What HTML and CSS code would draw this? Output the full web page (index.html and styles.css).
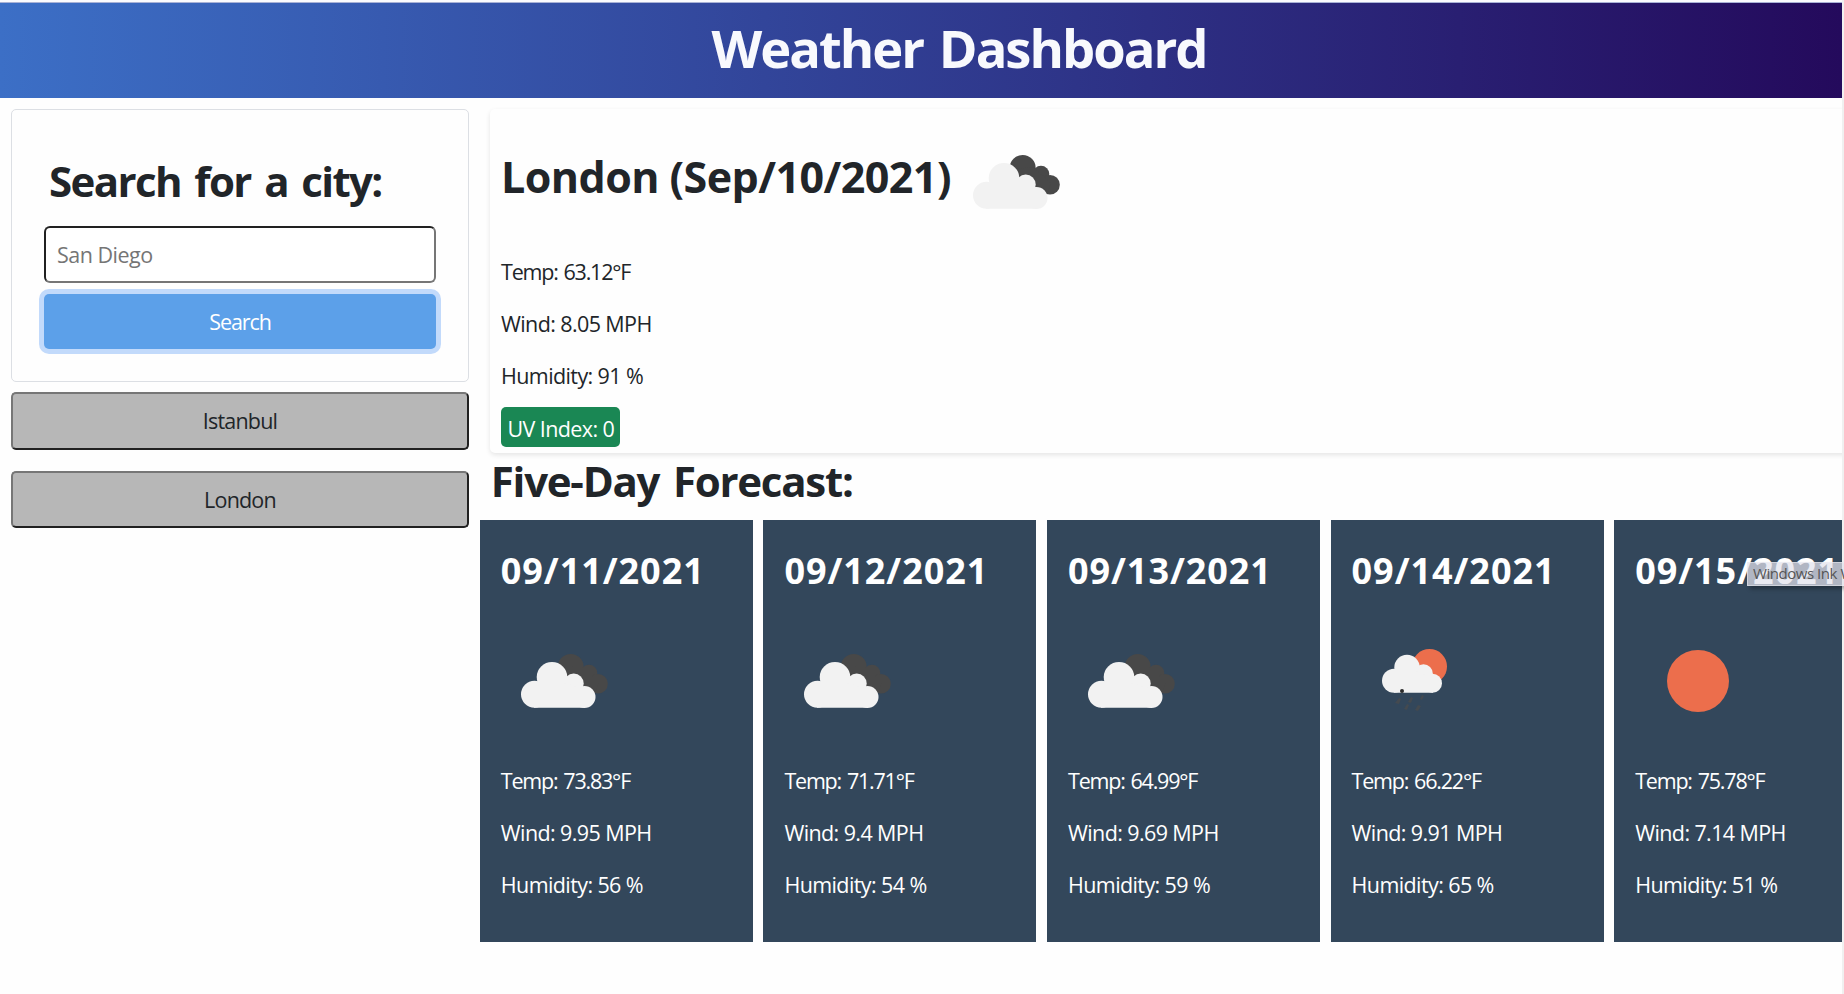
FILE: index.html
```html
<!DOCTYPE html>
<html lang="en">
<head>
<meta charset="utf-8">
<title>Weather Dashboard</title>
<link rel="stylesheet" href="styles.css">
</head>
<body>
<svg width="0" height="0" class="defs">
  <symbol id="clouds" viewBox="0 0 87 54">
    <g fill="#484848"><circle cx="49.700" cy="13" r="13"/><circle cx="68" cy="19" r="8.300"/><circle cx="77" cy="29.800" r="9.800"/><path d="M42 14L60 12L78 28L74 39L66 34L50 26Z"/></g>
    <g fill="#f2f2f2"><ellipse cx="31" cy="23" rx="15.300" ry="15"/><circle cx="13.500" cy="40.200" r="13.500"/><circle cx="52.700" cy="29.500" r="10"/><circle cx="63.500" cy="43" r="11"/><path d="M13 53.700V36L20 26L40 28L60 34L64 53.700Z"/></g>
  </symbol>
  <symbol id="rain" viewBox="0 0 66 63">
    <circle cx="47.500" cy="17.500" r="17.500" fill="#ec6e4c"/>
    <g fill="#f2f2f2"><circle cx="25" cy="18.500" r="12.700"/><circle cx="12" cy="31.800" r="12"/><circle cx="41.500" cy="24.500" r="9.300"/><circle cx="50.500" cy="34.300" r="9.500"/><path d="M12 43.800V30L20 22L34 22L48 28L51 43.800Z"/></g>
    <circle cx="20" cy="42" r="2" fill="#2b2b2b"/>
    <g fill="#444a50"><path d="M13 54l4-5 2 1-2 5zM26 53l3-5 2 1-2 5zM38 50l2-4 2 1-2 4zM22 60l3-5 2 1-2 5zM33 61l3-5 3 1-3 5z"/></g>
  </symbol>
  <symbol id="sun" viewBox="0 0 62 62"><circle cx="31" cy="31" r="31" fill="#ec6e4c"/></symbol>
</svg>
<div class="window">
  <header class="banner"><h1>Weather Dashboard</h1></header>
  <div class="layout">
    <aside class="sidebar">
      <form class="search">
        <h2>Search for a city:</h2>
        <input class="city" type="text" placeholder="San Diego">
        <button class="go" type="button">Search</button>
      </form>
      <button class="recent" type="button">Istanbul</button>
      <button class="recent" type="button">London</button>
    </aside>
    <main class="main">
      <section class="today">
        <div class="title"><h2>London (Sep/10/2021)</h2><svg class="clouds"><use href="#clouds"/></svg></div>
        <p class="temp">Temp: 63.12°F</p><p>Wind: 8.05 MPH</p><p>Humidity: 91 %</p>
        <span class="uv">UV Index: 0</span>
      </section>
      <h2 class="forecast-title">Five-Day Forecast:</h2>
      <section class="forecast">
        <article><h3>09/11/2021</h3><div class="icon"><svg class="clouds"><use href="#clouds"/></svg></div><p class="temp">Temp: 73.83°F</p><p>Wind: 9.95 MPH</p><p>Humidity: 56 %</p></article>
        <article><h3>09/12/2021</h3><div class="icon"><svg class="clouds"><use href="#clouds"/></svg></div><p class="temp">Temp: 71.71°F</p><p>Wind: 9.4 MPH</p><p>Humidity: 54 %</p></article>
        <article><h3>09/13/2021</h3><div class="icon"><svg class="clouds"><use href="#clouds"/></svg></div><p class="temp">Temp: 64.99°F</p><p>Wind: 9.69 MPH</p><p>Humidity: 59 %</p></article>
        <article><h3>09/14/2021</h3><div class="icon icon-rain"><svg class="rain"><use href="#rain"/></svg></div><p class="temp">Temp: 66.22°F</p><p>Wind: 9.91 MPH</p><p>Humidity: 65 %</p></article>
        <article><h3>09/15/2021</h3><div class="icon icon-sun"><svg class="sun"><use href="#sun"/></svg></div><p class="temp">Temp: 75.78°F</p><p>Wind: 7.14 MPH</p><p>Humidity: 51 %</p></article>
      </section>
    </main>
  </div>
</div>
<div class="tooltip">Windows Ink W</div>
</body>
</html>
```

FILE: styles.css
```css
* { box-sizing: border-box; }
html { overflow: hidden; background: #f0f0f0; }
body { margin: 0; width: 1844px; height: 994px; position: relative; overflow: hidden; font: 21.5px/36px "Open Sans", "Noto Sans", sans-serif; color: #212529; letter-spacing: -0.6px; }
h1, h2, h3, p { margin: 0; }
h2 { font-size: 43px; line-height: 52px; font-weight: 700; letter-spacing: -0.55px; white-space: nowrap; }
.defs { position: absolute; }
.window { width: 1842px; height: 994px; overflow: hidden; background: #fefefe; }
.banner { width: 1918px; height: 98px; border-top: 2px solid #fbfbfe; box-shadow: inset 0 1px #a9b2d6; background: linear-gradient(to right, #3c6fc6, #240a5c 1842px); text-align: center; }
.banner h1 { font-size: 52.5px; line-height: 92px; font-weight: 700; color: #f8f9fd; letter-spacing: -2px; word-spacing: 4px; }
.layout { display: flex; padding-top: 11px; width: 1918px; }
.sidebar { width: 458px; margin-left: 11px; flex: none; display: flex; flex-direction: column; }
.search { height: 273px; border: 1px solid #dcdfe4; border-radius: 5px; padding: 45px 32px 0; display: flex; flex-direction: column; }
.search h2 { padding-left: 5px; height: 71px; font-size: 42px; letter-spacing: -1.6px; word-spacing: 4px; }
.city { height: 57px; border: 2px inset #767676; border-radius: 6px; padding: 0 11px; font: inherit; letter-spacing: -0.5px; background: #fff; }
.city::placeholder { color: #757575; }
.go { height: 55px; margin-top: 11px; border: 0; border-radius: 5px; background: #5ca0e9; color: #fff; font: inherit; letter-spacing: -1.1px; box-shadow: 0 0 0 5px #c2dafb; }
.recent { height: 58px; margin-top: 10px; border: 2px solid; border-color: #767676 #212121 #212121 #767676; border-radius: 5px; background: #b7b7b7; color: #212529; font: inherit; letter-spacing: -0.8px; }
.recent + .recent { height: 57px; margin-top: 21px; }
.main { flex: 1; padding-left: 10.8px; }
.today { margin-left: 10px; height: 344px; padding: 0 11.2px; border-radius: 5px; box-shadow: 0 2px 5px rgba(0,0,0,.1); }
.title { display: flex; height: 145px; padding-top: 42px; }
.title .clouds { margin: 4px 0 0 22.500px; }
.clouds { width: 87px; height: 54px; }
.rain { width: 66px; height: 63px; }
.sun { width: 62px; height: 62px; }
.today p, .forecast p { height: 52px; }
.today p.temp, .forecast p.temp { letter-spacing: -1.2px; word-spacing: 1.5px; }
.uv { display: block; width: 119px; height: 40px; margin: -3px 0 0 .5px; padding-left: 6px; line-height: 43px; border-radius: 5px; background: #1a8754; color: #fff; white-space: nowrap; }
.forecast-title { padding: 2px 0 0 11px; height: 67px; font-size: 42px; letter-spacing: -1.25px; word-spacing: 4px; }
.forecast { display: flex; gap: 10.6px; }
.forecast article { flex: none; width: 273px; height: 422px; padding: 29px 21px 0; background: #33475b; color: #fff; }
.forecast h3 { font-size: 36px; line-height: 44px; font-weight: 700; letter-spacing: 0.95px; }
.icon { height: 170px; display: flex; padding: 61px 0 0 20px; }
.icon-rain { padding: 56px 0 0 30px; }
.icon-sun { padding: 57px 0 0 32px; }
.tooltip { position: absolute; left: 1747px; top: 562px; width: 97px; height: 24px; padding-left: 5px; background: rgba(226,226,236,.72); border: 1px solid rgba(240,240,245,.5); border-right: 0; box-shadow: 3px 3px 4px rgba(0,0,0,.3); color: #555; font-size: 15px; line-height: 21px; white-space: nowrap; overflow: hidden; letter-spacing: -0.45px; }
```
